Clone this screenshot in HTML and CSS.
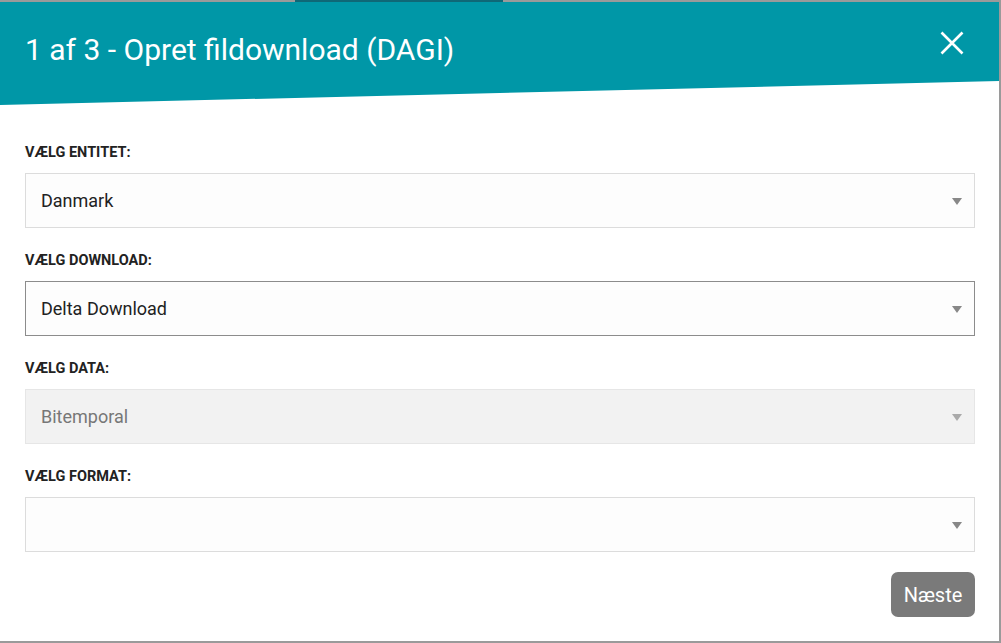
FILE: index.html
```html
<!DOCTYPE html>
<html lang="da">
<head>
  <meta charset="UTF-8" />
  <title>Opret fildownload (DAGI)</title>
  <link rel="stylesheet" href="styles.css">
</head>
<body>

  <div class="topbar"><span class="topbar-active"></span></div>

  <div class="dialog">
    <div class="dialog-header">
      <h1>1 af 3 - Opret fildownload (DAGI)</h1>
      <button class="close" title="Luk">
        <svg width="24" height="24" viewBox="0 0 24 24">
          <path d="M1.5 1.5 L22.5 22.5 M22.5 1.5 L1.5 22.5" stroke="#fff" stroke-width="2.6" fill="none" />
        </svg>
      </button>
    </div>

    <div class="dialog-body">
      <div class="field">
        <label>Vælg entitet:</label>
        <div class="select">
          <span>Danmark</span>
          <svg class="arrow" width="10" height="7" viewBox="0 0 10 7"><path d="M0 0 H10 L5 7 Z" /></svg>
        </div>
      </div>

      <div class="field">
        <label>Vælg download:</label>
        <div class="select focused">
          <span>Delta Download</span>
          <svg class="arrow" width="10" height="7" viewBox="0 0 10 7"><path d="M0 0 H10 L5 7 Z" /></svg>
        </div>
      </div>

      <div class="field">
        <label>Vælg data:</label>
        <div class="select disabled">
          <span>Bitemporal</span>
          <svg class="arrow" width="10" height="7" viewBox="0 0 10 7"><path d="M0 0 H10 L5 7 Z" /></svg>
        </div>
      </div>

      <div class="field">
        <label>Vælg format:</label>
        <div class="select">
          <span></span>
          <svg class="arrow" width="10" height="7" viewBox="0 0 10 7"><path d="M0 0 H10 L5 7 Z" /></svg>
        </div>
      </div>

      <div class="actions">
        <button class="next">Næste</button>
      </div>
    </div>
  </div>

</body>
</html>
```

FILE: styles.css
```css
body {
  margin: 0;
  background: #9a9a9a;
  font-family: Roboto, 'Liberation Sans', sans-serif;
  color: #222;
}

.topbar {
  height: 2px;
  display: flex;
}

.topbar-active {
  margin-left: 295px;
  width: 208px;
  background: #0f6877;
}

.dialog {
  width: 999px;
  height: 639px;
  background: #fff;
}

.dialog-header {
  height: 104px;
  background: #0097a7;
  clip-path: polygon(0 0, 100% 0, 100% 79px, 0 103px);
  display: flex;
  justify-content: space-between;
  align-items: flex-start;
  padding: 0 35px 0 25px;
}

.dialog-header h1 {
  margin: 28px 0 0;
  font-size: 30px;
  font-weight: 400;
  line-height: 40px;
  color: #fff;
}

.close {
  margin-top: 29px;
  padding: 0;
  border: none;
  background: none;
  cursor: pointer;
  width: 24px;
  height: 24px;
}

.dialog-body {
  padding: 37px 24px 0 25px;
}

.field {
  margin-bottom: 23px;
}

.field label {
  display: block;
  font-size: 14.5px;
  font-weight: 700;
  line-height: 20px;
  text-transform: uppercase;
  margin-bottom: 10px;
  color: #222;
}

.select {
  height: 55px;
  box-sizing: border-box;
  border: 1px solid #dcdcdc;
  background: #fdfdfd;
  display: flex;
  align-items: center;
  justify-content: space-between;
  padding: 0 12px 0 15px;
  font-size: 18px;
  color: #222;
}

.select span {
  margin-top: -1px;
}

.select .arrow {
  fill: #888;
  margin-top: 1px;
}

.select.focused {
  border-color: #8c8c8c;
}

.select.disabled {
  background: #f2f2f2;
  border-color: #e6e6e6;
  color: #777;
}

.select.disabled .arrow {
  fill: #aaa;
}

.actions {
  display: flex;
  justify-content: flex-end;
  margin-top: -3px;
}

.next {
  width: 84px;
  height: 45px;
  border: none;
  border-radius: 7px;
  background: #7a7a7a;
  color: #fff;
  font-family: Roboto, 'Liberation Sans', sans-serif;
  font-size: 20px;
  cursor: pointer;
}
```
